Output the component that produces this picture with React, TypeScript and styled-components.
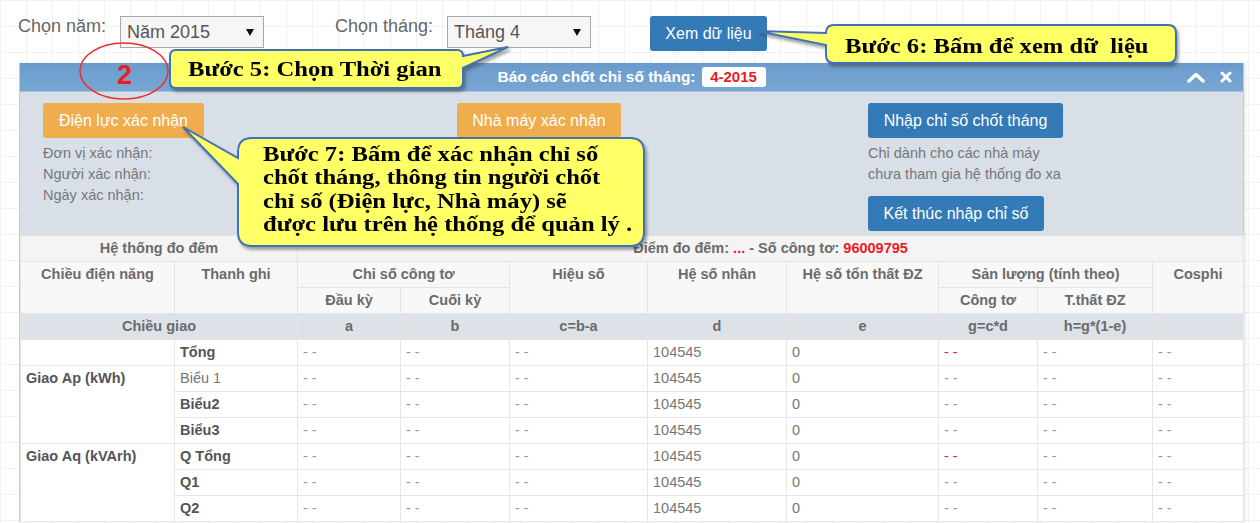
import React from "react";
import styled, { createGlobalStyle } from "styled-components";

const GlobalStyle = createGlobalStyle`
  html, body { margin: 0; padding: 0; }
  body {
    font-family: "Liberation Sans", Arial, sans-serif;
    background-color: #ffffff;
    background-image:
      linear-gradient(to right, #f2f2f2 1px, transparent 1px),
      linear-gradient(to bottom, #f2f2f2 1px, transparent 1px);
    background-size: 26px 26px;
  }
`;

const Page = styled.div`
  position: relative;
  width: 1260px;
  height: 523px;
  overflow: hidden;
  padding-top: 16px;
  box-sizing: border-box;
`;

const Toolbar = styled.div`
  display: flex;
  align-items: flex-start;
  height: 35px;
  padding-left: 18px;
`;

const FieldLabel = styled.div<{ $w: number; $ml?: number }>`
  flex-shrink: 0;
  width: ${(p) => p.$w}px;
  margin-left: ${(p) => p.$ml ?? 0}px;
  font-size: 18px;
  line-height: 20px;
  color: #666;
`;

const SelectBox = styled.div`
  flex-shrink: 0;
  width: 144px;
  height: 32px;
  box-sizing: border-box;
  border: 1px solid #a8a8a8;
  background: #f6f6f6;
  display: flex;
  align-items: center;
  justify-content: space-between;
  padding: 0 9px 0 6px;
  font-size: 18px;
  color: #555;
`;

const Caret = styled.span`
  width: 0;
  height: 0;
  border-left: 4px solid transparent;
  border-right: 4px solid transparent;
  border-top: 7px solid #111;
`;

const Button = styled.button<{ $variant: "primary" | "warning"; $w: number; $ml?: number }>`
  flex-shrink: 0;
  width: ${(p) => p.$w}px;
  height: 35px;
  margin-left: ${(p) => p.$ml ?? 0}px;
  padding: 0;
  border: 0;
  border-radius: 3px;
  background: ${(p) => (p.$variant === "primary" ? "#337ab7" : "#f0ad4e")};
  color: #fff;
  font-family: "Liberation Sans", Arial, sans-serif;
  font-size: 16px;
  line-height: 35px;
  text-align: center;
`;

const Panel = styled.div`
  margin: 12px 0 0 19px;
  width: 1225px;
  box-sizing: border-box;
  border-left: 1px solid #c3cad2;
  border-right: 1px solid #c3cad2;
  box-shadow: 2px 0 3px rgba(0, 0, 0, 0.08);
  background: #fff;
`;

const HeaderBar = styled.div`
  display: grid;
  grid-template-columns: 1fr auto 1fr;
  align-items: center;
  height: 28px;
  background: linear-gradient(#6a9bcc, #79a7d4);
  border-bottom: 1px solid #a3c2e0;
`;

const TitleGroup = styled.div`
  grid-column: 2;
  display: flex;
  align-items: center;
  gap: 6px;
`;

const Title = styled.span`
  color: #fff;
  font-weight: bold;
  font-size: 15.5px;
`;

const Badge = styled.span`
  width: 64px;
  height: 20px;
  border-radius: 3px;
  background: #fff;
  color: #ec1c24;
  font-weight: bold;
  font-size: 15px;
  line-height: 20px;
  text-align: center;
`;

const Tools = styled.div`
  grid-column: 3;
  justify-self: end;
  display: flex;
  align-items: center;
  gap: 15px;
  padding-right: 11px;
`;

const PanelBody = styled.div`
  display: grid;
  grid-template-columns: 414px 411px 1fr;
  height: 143px;
  box-sizing: border-box;
  padding: 11px 0 0 23px;
  background: #d8dfe7;
`;

const Column = styled.div`
  display: flex;
  flex-direction: column;
  align-items: flex-start;
`;

const InfoText = styled.div<{ $mb?: number }>`
  margin-top: 5px;
  margin-bottom: ${(p) => p.$mb ?? 0}px;
  font-size: 14.5px;
  line-height: 21px;
  color: #777;
`;

const Table = styled.table`
  width: 100%;
  border-collapse: collapse;
  table-layout: fixed;
  font-size: 14.5px;
`;

const Col = styled.col<{ $w: number }>`
  width: ${(p) => p.$w}px;
`;

const HeadRow = styled.tr<{ $tone?: "plain" | "gray" | "sys" }>`
  background: ${(p) =>
    p.$tone === "gray" ? "#dce2e8" : p.$tone === "sys" ? "#f4f4f4" : "#f8f8f8"};
`;

const Th = styled.th<{ $top?: boolean }>`
  height: 25px;
  padding: ${(p) => (p.$top ? "4px 5px 0" : "0 5px")};
  vertical-align: ${(p) => (p.$top ? "top" : "middle")};
  border: 1px solid #e4e4e4;
  color: #6b6b6b;
  font-weight: bold;
  text-align: center;
  line-height: 17px;
  white-space: nowrap;
  overflow: hidden;
`;

const Td = styled.td<{ $top?: boolean; $bold?: boolean; $tone?: "dash" | "red" | "text" }>`
  height: 25px;
  padding: ${(p) => (p.$top ? "4px 5px 0" : "0 5px")};
  vertical-align: ${(p) => (p.$top ? "top" : "middle")};
  border: 1px solid #e6e6e6;
  background: #fff;
  text-align: left;
  line-height: 17px;
  white-space: nowrap;
  font-weight: ${(p) => (p.$bold ? "bold" : "normal")};
  color: ${(p) =>
    p.$tone === "red" ? "#ec1c24" : p.$tone === "dash" ? "#999" : p.$bold ? "#555" : "#777"};
`;

const Red = styled.span`
  color: #ec1c24;
`;

const Overlay = styled.div`
  position: absolute;
  left: 0;
  top: 0;
  width: 1260px;
  height: 523px;
  pointer-events: none;
`;

const Shapes = styled.svg`
  position: absolute;
  left: 0;
  top: 0;
`;

const CalloutText = styled.div<{ $x: number; $y: number }>`
  position: absolute;
  left: ${(p) => p.$x}px;
  top: ${(p) => p.$y}px;
  font-family: "Liberation Serif", "Times New Roman", serif;
  font-weight: bold;
  font-size: 20.5px;
  line-height: 23.3px;
  color: #000;
  white-space: nowrap;
  transform: scaleX(1.2);
  transform-origin: left top;
`;

const NumberMark = styled.div`
  position: absolute;
  left: 117px;
  top: 62px;
  font-family: "Liberation Sans", Arial, sans-serif;
  font-weight: bold;
  font-size: 27px;
  line-height: 27px;
  color: #e8201f;
`;

const widths = [154, 123, 103, 109, 138, 139, 152, 99, 115, 91];

type Row = { label: string; bold: boolean; redG: boolean };

const apRows: Row[] = [
  { label: "Biểu 1", bold: false, redG: false },
  { label: "Biểu2", bold: true, redG: false },
  { label: "Biểu3", bold: true, redG: false },
];
const aqRows: Row[] = [
  { label: "Q Tổng", bold: true, redG: true },
  { label: "Q1", bold: true, redG: false },
  { label: "Q2", bold: true, redG: false },
];

const DataCells: React.FC<{ redG: boolean }> = ({ redG }) => (
  <>
    <Td $tone="dash">- -</Td>
    <Td $tone="dash">- -</Td>
    <Td $tone="dash">- -</Td>
    <Td $tone="text">104545</Td>
    <Td $tone="text">0</Td>
    <Td $tone={redG ? "red" : "dash"}>- -</Td>
    <Td $tone="dash">- -</Td>
    <Td $tone="dash">- -</Td>
  </>
);

const ChevronUp = () => (
  <svg width="18" height="11" viewBox="0 0 18 11">
    <path d="M2 9 L9 2.5 L16 9" fill="none" stroke="#fff" strokeWidth="3.4" strokeLinecap="round" strokeLinejoin="round" />
  </svg>
);

const CloseIcon = () => (
  <svg width="12" height="12" viewBox="0 0 12 12">
    <path d="M2 2 L10 10 M10 2 L2 10" fill="none" stroke="#fff" strokeWidth="3" strokeLinecap="round" />
  </svg>
);

export default function App() {
  return (
    <>
      <GlobalStyle />
      <Page>
        <Toolbar>
          <FieldLabel $w={102}>Chọn năm:</FieldLabel>
          <SelectBox>
            <span>Năm 2015</span>
            <Caret />
          </SelectBox>
          <FieldLabel $w={112} $ml={71}>Chọn tháng:</FieldLabel>
          <SelectBox>
            <span>Tháng 4</span>
            <Caret />
          </SelectBox>
          <Button $variant="primary" $w={117} $ml={59}>Xem dữ liệu</Button>
        </Toolbar>

        <Panel>
          <HeaderBar>
            <TitleGroup>
              <Title>Báo cáo chốt chỉ số tháng:</Title>
              <Badge>4-2015</Badge>
            </TitleGroup>
            <Tools>
              <ChevronUp />
              <CloseIcon />
            </Tools>
          </HeaderBar>

          <PanelBody>
            <Column>
              <Button $variant="warning" $w={161}>Điện lực xác nhận</Button>
              <InfoText>
                Đơn vị xác nhận:
                <br />
                Người xác nhận:
                <br />
                Ngày xác nhận:
              </InfoText>
            </Column>
            <Column>
              <Button $variant="warning" $w={164}>Nhà máy xác nhận</Button>
            </Column>
            <Column>
              <Button $variant="primary" $w={195}>Nhập chỉ số chốt tháng</Button>
              <InfoText $mb={11}>
                Chỉ dành cho các nhà máy
                <br />
                chưa tham gia hệ thống đo xa
              </InfoText>
              <Button $variant="primary" $w={176}>Kết thúc nhập chỉ số</Button>
            </Column>
          </PanelBody>

          <Table>
            <colgroup>
              {widths.map((w, i) => (
                <Col key={i} $w={w} />
              ))}
            </colgroup>
            <thead>
              <HeadRow $tone="sys">
                <Th colSpan={2}>Hệ thống đo đếm</Th>
                <Th colSpan={8}>
                  Điểm đo đếm: <Red>...</Red> - Số công tơ: <Red>96009795</Red>
                </Th>
              </HeadRow>
              <HeadRow>
                <Th rowSpan={2} $top>Chiều điện năng</Th>
                <Th rowSpan={2} $top>Thanh ghi</Th>
                <Th colSpan={2}>Chỉ số công tơ</Th>
                <Th rowSpan={2} $top>Hiệu số</Th>
                <Th rowSpan={2} $top>Hệ số nhân</Th>
                <Th rowSpan={2} $top>Hệ số tổn thất ĐZ</Th>
                <Th colSpan={2}>Sản lượng (tính theo)</Th>
                <Th rowSpan={2} $top>Cosphi</Th>
              </HeadRow>
              <HeadRow>
                <Th>Đầu kỳ</Th>
                <Th>Cuối kỳ</Th>
                <Th>Công tơ</Th>
                <Th>T.thất ĐZ</Th>
              </HeadRow>
              <HeadRow $tone="gray">
                <Th colSpan={2}>Chiều giao</Th>
                <Th>a</Th>
                <Th>b</Th>
                <Th>c=b-a</Th>
                <Th>d</Th>
                <Th>e</Th>
                <Th>g=c*d</Th>
                <Th>h=g*(1-e)</Th>
                <Th></Th>
              </HeadRow>
            </thead>
            <tbody>
              <tr>
                <Td></Td>
                <Td $bold>Tổng</Td>
                <DataCells redG />
              </tr>
              {apRows.map((r, i) => (
                <tr key={r.label}>
                  {i === 0 && (
                    <Td rowSpan={apRows.length} $top $bold>
                      Giao Ap (kWh)
                    </Td>
                  )}
                  <Td $bold={r.bold}>{r.label}</Td>
                  <DataCells redG={r.redG} />
                </tr>
              ))}
              {aqRows.map((r, i) => (
                <tr key={r.label}>
                  {i === 0 && (
                    <Td rowSpan={aqRows.length} $top $bold>
                      Giao Aq (kVArh)
                    </Td>
                  )}
                  <Td $bold={r.bold}>{r.label}</Td>
                  <DataCells redG={r.redG} />
                </tr>
              ))}
            </tbody>
          </Table>
        </Panel>

        <Overlay>
          <Shapes width="1260" height="523" viewBox="0 0 1260 523">
            <defs>
              <filter id="shadow" x="-10%" y="-20%" width="120%" height="150%">
                <feDropShadow dx="2" dy="3" stdDeviation="1.6" floodColor="#333" floodOpacity="0.45" />
              </filter>
            </defs>
            <ellipse cx="124" cy="71" rx="44" ry="28" fill="none" stroke="#e5322d" strokeWidth="1.5" />
            <path
              d="M176,50 H457 Q463,50 463,56 L508,47 L463,68 V82 Q463,88 457,88 H176 Q170,88 170,82 V56 Q170,50 176,50 Z"
              fill="#ffff66"
              stroke="#3f72b5"
              strokeWidth="2"
              filter="url(#shadow)"
            />
            <path
              d="M834,25 H1168 Q1176,25 1176,33 V55 Q1176,63 1168,63 H834 Q826,63 826,55 V45 L757,31 L826,33 Q826,25 834,25 Z"
              fill="#ffff66"
              stroke="#3f72b5"
              strokeWidth="2"
              filter="url(#shadow)"
            />
            <path
              d="M252,138 H630 Q644,138 644,152 V232 Q644,246 630,246 H252 Q238,246 238,232 V184 L183,127 L238,158 V152 Q238,138 252,138 Z"
              fill="#ffff66"
              stroke="#3f72b5"
              strokeWidth="2"
              filter="url(#shadow)"
            />
          </Shapes>
          <NumberMark>2</NumberMark>
          <CalloutText $x={188} $y={58}>Bước 5: Chọn Thời gian</CalloutText>
          <CalloutText $x={845} $y={35}>Bước 6: Bấm để xem dữ&nbsp; liệu</CalloutText>
          <CalloutText $x={263} $y={143}>
            <div>Bước 7: Bấm để xác nhận chỉ số</div>
            <div>chốt tháng, thông tin người chốt</div>
            <div>chỉ số (Điện lực, Nhà máy) sẽ</div>
            <div>được lưu trên hệ thống để quản lý .</div>
          </CalloutText>
        </Overlay>
      </Page>
    </>
  );
}
